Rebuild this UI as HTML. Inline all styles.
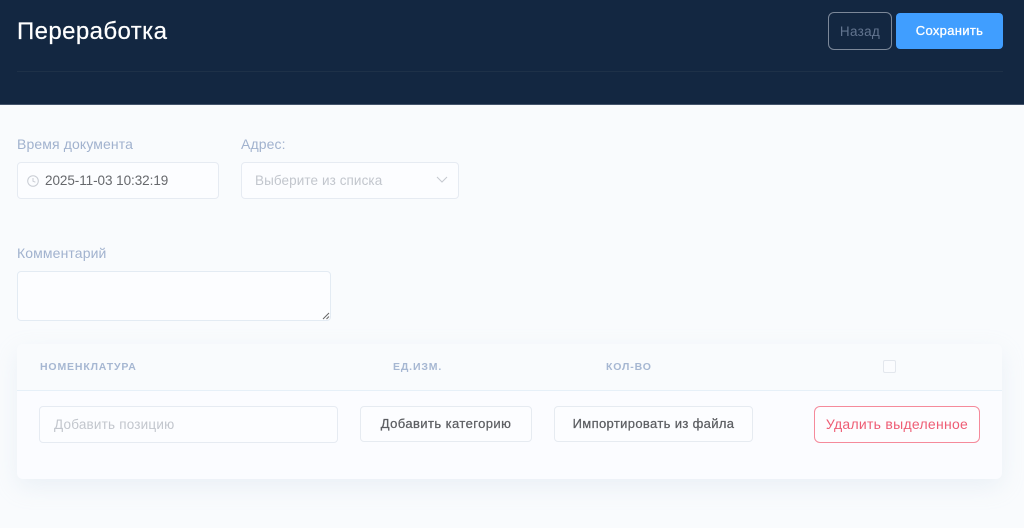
<!DOCTYPE html>
<html lang="ru">
<head>
<meta charset="utf-8">
<title>Переработка</title>
<style>
html,body{margin:0;padding:0;width:1024px;height:528px;overflow:hidden;background:#f9fbfd;font-family:"Liberation Sans",sans-serif;}
.a{position:absolute;box-sizing:border-box;white-space:nowrap;}
.hdr{left:0;top:0;width:1024px;height:105px;background:#132741;border-bottom:1px solid #44546b;}
.line{left:17px;top:71px;width:986px;height:1px;background:#1e3148;}
.lbl{font-size:14px;line-height:18px;color:#a1b2ce;letter-spacing:.12px;}
.box{background:#fcfdff;border:1px solid #e6ebf2;border-radius:4px;}
.th{font-size:10.5px;line-height:14px;font-weight:bold;color:#a6b7d2;letter-spacing:.85px;}
.btn{background:#fcfdff;border:1px solid #e6ebf1;border-radius:4px;display:flex;align-items:center;justify-content:center;font-size:13px;line-height:15px;padding-bottom:2px;color:#5c5e62;letter-spacing:.42px;-webkit-text-stroke:.25px #5c5e62;}
</style>
</head>
<body>
<div class="a hdr"></div>
<div class="a line"></div>
<div class="a" style="left:17px;top:17px;font-size:24px;line-height:30px;color:#fff;letter-spacing:.4px;-webkit-text-stroke:.2px #fff;">Переработка</div>
<div class="a" style="left:828px;top:12px;width:64px;height:38px;border:1px solid #7c8899;border-radius:6px;display:flex;align-items:center;justify-content:center;font-size:13.5px;color:#62748f;letter-spacing:.3px;">Назад</div>
<div class="a" style="left:896px;top:13px;width:107px;height:36px;background:#409eff;border-radius:4px;display:flex;align-items:center;justify-content:center;padding-bottom:1px;font-size:13px;color:#fff;letter-spacing:.32px;-webkit-text-stroke:.3px #fff;">Сохранить</div>

<div class="a lbl" style="left:17px;top:135px;">Время документа</div>
<div class="a box" style="left:17px;top:162px;width:202px;height:37px;"></div>
<svg class="a" style="left:27px;top:175px;" width="12" height="12" viewBox="0 0 12 12" fill="none" stroke="#c8ccd3" stroke-width="1"><circle cx="6" cy="6" r="5.3"/><path d="M6 3v3.2l2.4 1"/></svg>
<div class="a" style="left:45px;top:172px;font-size:13.5px;line-height:17px;color:#66686c;letter-spacing:-.06px;">2025-11-03 10:32:19</div>

<div class="a lbl" style="left:241px;top:135px;">Адрес:</div>
<div class="a box" style="left:241px;top:162px;width:218px;height:37px;"></div>
<div class="a" style="left:255px;top:172px;font-size:13.5px;line-height:17px;color:#c2c6cd;letter-spacing:.09px;">Выберите из списка</div>
<svg class="a" style="left:436px;top:176px;" width="12" height="8" viewBox="0 0 12 8" fill="none" stroke="#c4c8cf" stroke-width="1"><path d="M1 1l5 5 5-5"/></svg>

<div class="a lbl" style="left:17px;top:244px;">Комментарий</div>
<div class="a box" style="left:17px;top:271px;width:314px;height:50px;border-color:#e3ebf3;"></div>
<svg class="a" style="left:322px;top:312px;" width="8" height="8" viewBox="0 0 8 8" fill="none" stroke="#666" stroke-width="1"><path d="M1 7L7 1M4.5 7L7 4.5"/></svg>

<div class="a" style="left:17px;top:344px;width:985px;height:135px;background:#fbfcff;border-radius:6px;box-shadow:0 8px 24px rgba(180,198,222,.2);"></div>
<div class="a" style="left:17px;top:344px;width:985px;height:47px;background:#f9fbfd;border-radius:6px 6px 0 0;border-bottom:1px solid #e6f0f8;"></div>
<div class="a th" style="left:40px;top:360px;">НОМЕНКЛАТУРА</div>
<div class="a th" style="left:393px;top:360px;">ЕД.ИЗМ.</div>
<div class="a th" style="left:606px;top:360px;">КОЛ-ВО</div>
<div class="a" style="left:883px;top:360px;width:13px;height:13px;background:#fbfcfe;border:1px solid #e3e7ed;border-radius:2px;"></div>

<div class="a box" style="left:39px;top:406px;width:299px;height:37px;"></div>
<div class="a" style="left:54px;top:416px;font-size:13.5px;line-height:17px;color:#c2c6cd;letter-spacing:.2px;">Добавить позицию</div>
<div class="a btn" style="left:360px;top:406px;width:172px;height:36px;">Добавить категорию</div>
<div class="a btn" style="left:554px;top:406px;width:199px;height:36px;letter-spacing:.35px;">Импортировать из файла</div>
<div class="a" style="left:814px;top:406px;width:166px;height:37px;background:#fdfdff;border:1px solid #f58a9b;border-radius:6px;display:flex;align-items:center;justify-content:center;padding-bottom:2px;font-size:14px;color:#ee5c74;letter-spacing:.27px;">Удалить выделенное</div>
</body>
</html>
